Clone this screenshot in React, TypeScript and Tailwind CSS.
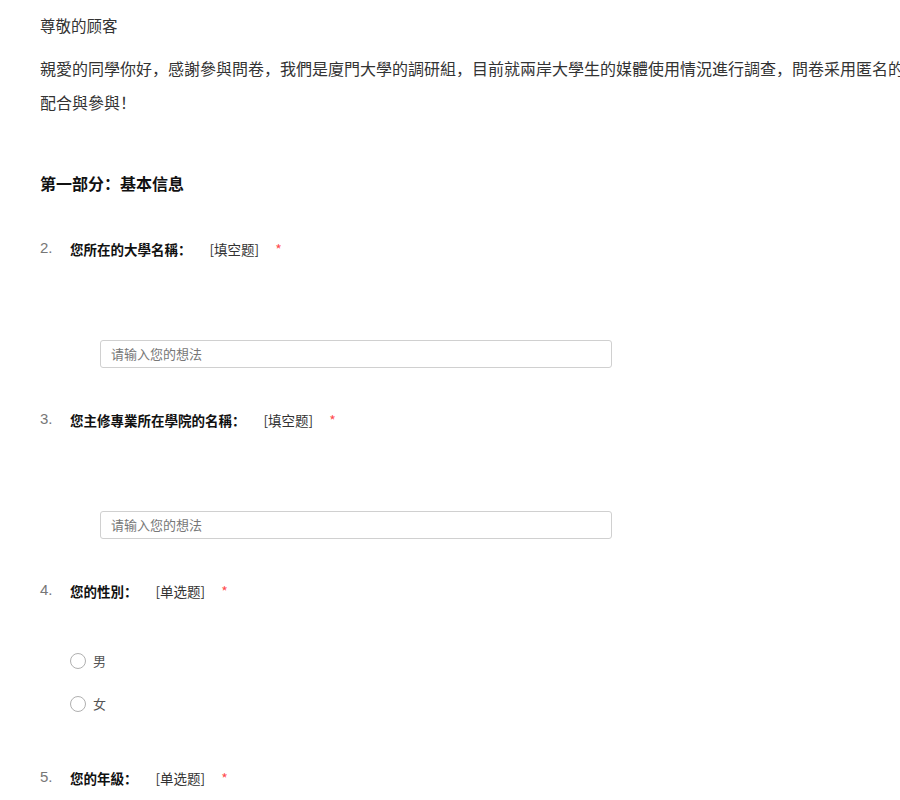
const font = "font-['Noto_Sans_CJK_SC','Noto_Sans',sans-serif]";

function QTitle({ no, title, kind }: { no: number; title: string; kind: string }) {
    return (
        <div className="flex items-center h-[20px] text-[13.5px]">
            <span className="w-[30px] -mt-[2px] text-[15px] text-[#777] font-['Liberation_Sans',sans-serif]">{no}.</span>
            <span className="font-bold text-[#111]">{title}</span>
            <span className="ml-[18px] text-[#333]">[{kind}]</span>
            <span className="ml-[16px] text-[14px] text-[#ff4d4f]">*</span>
        </div>
    );
}

function TextInput() {
    return (
        <div className="ml-[60px] w-[512px] h-[28px] border border-[#d0d0d0] rounded-[3px] flex items-center px-[10px] text-[13px] text-[#777]">
            请输入您的想法
        </div>
    );
}

function Radio({ label }: { label: string }) {
    return (
        <label className="ml-[30px] flex items-center h-[20px] gap-[7px] text-[13px] text-[#555] cursor-pointer">
            <span className="w-[16px] h-[16px] rounded-full border-[1.5px] border-[#b0b0b0] bg-white" />
            <span>{label}</span>
        </label>
    );
}

export default function App() {
    return (
        <div className={`w-[900px] h-[800px] overflow-hidden bg-white ${font}`}>
            <div className="w-[1240px] px-[40px] pt-[14px] text-[#333]">
                <p className="text-[15.5px] leading-[22px]">尊敬的顾客</p>
                <p className="mt-[15px] text-[16px] leading-[34px]">
                    <span className="whitespace-nowrap">親愛的同學你好，感謝參與問卷，我們是廈門大學的調研組，目前就兩岸大學生的媒體使用情況進行調查，問卷采用匿名的方式，感謝您的</span>
                    <br />
                    配合與參與！
                </p>

                <h2 className="mt-[52px] text-[16px] leading-[24px] font-bold text-[#111]">第一部分：基本信息</h2>

                <div className="mt-[44px]">
                    <QTitle no={2} title="您所在的大學名稱：" kind="填空题" />
                </div>
                <div className="mt-[81px]">
                    <TextInput />
                </div>

                <div className="mt-[42px]">
                    <QTitle no={3} title="您主修專業所在學院的名稱：" kind="填空题" />
                </div>
                <div className="mt-[81px]">
                    <TextInput />
                </div>

                <div className="mt-[42px]">
                    <QTitle no={4} title="您的性別：" kind="单选题" />
                </div>
                <div className="mt-[50px]">
                    <Radio label="男" />
                </div>
                <div className="mt-[23px]">
                    <Radio label="女" />
                </div>

                <div className="mt-[54px]">
                    <QTitle no={5} title="您的年級：" kind="单选题" />
                </div>
            </div>
        </div>
    );
}
